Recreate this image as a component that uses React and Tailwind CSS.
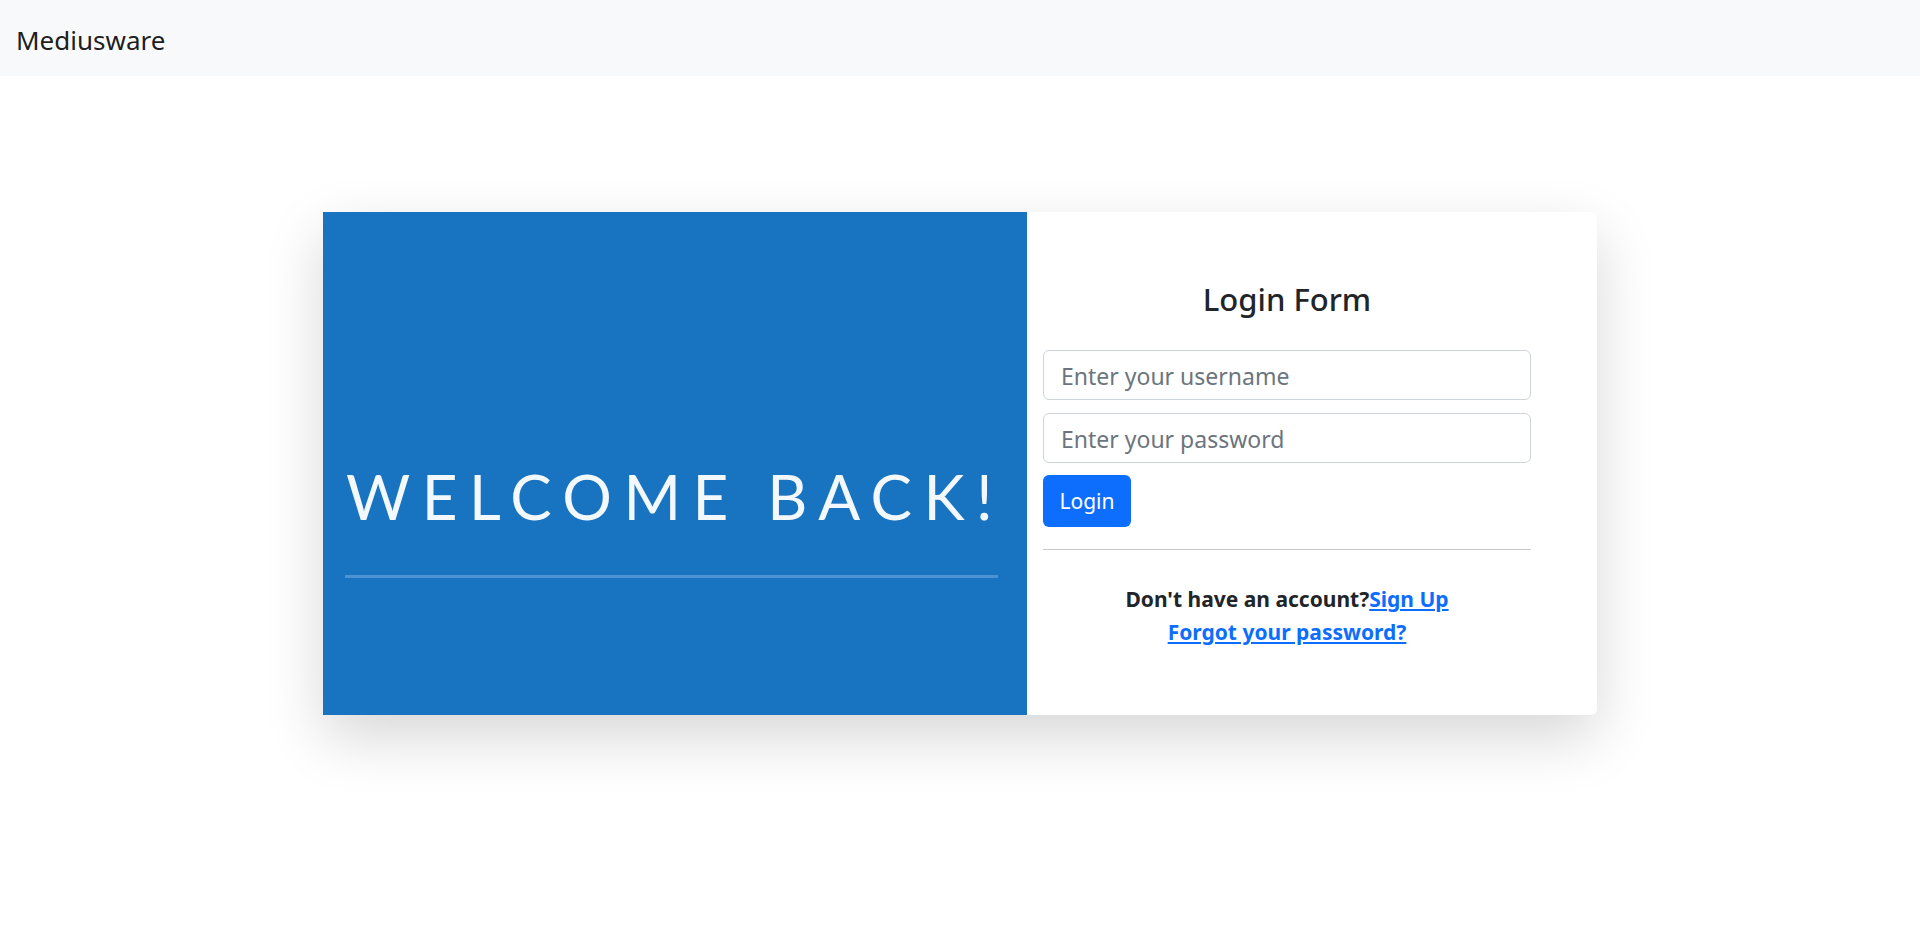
export default function App() {
  return (
    <div className="min-h-screen bg-white font-['Noto_Sans',sans-serif] text-[#212529]">
      {/* navbar */}
      <nav className="h-[76px] bg-[#f8f9fa] flex items-center px-[16px] pt-[4px]">
        <span className="text-[26px] text-black/90">Mediusware</span>
      </nav>

      {/* card */}
      <div className="w-[1274px] mx-auto mt-[136px] flex bg-white rounded-r-[6px] shadow-[0_22px_60px_rgba(0,0,0,0.16)]">
        <div className="w-[704px] h-[503px] bg-[#1873c0] flex flex-col pl-[23px] pt-[253px]">
          <div className="font-['Lato',sans-serif] font-normal text-[62px] leading-none tracking-[11.5px] text-white/95 whitespace-nowrap">
            WELCOME BACK!
          </div>
          <div className="mt-[48px] -ml-[1px] w-[653px] h-[3px] bg-[#4f92d0]" />
        </div>

        <div className="flex-1 pl-[16px]">
          <div className="w-[488px] flex flex-col">
            <h3 className="mt-[63px] h-[48px] flex items-center justify-center text-[31px] font-medium">Login Form</h3>
            <input
              type="text"
              placeholder="Enter your username"
              className="mt-[27px] h-[50px] w-full border border-[#ced4da] rounded-[6px] px-[17px] pt-[2px] text-[23px] placeholder:text-[#6c757d] outline-none"
            />
            <input
              type="password"
              placeholder="Enter your password"
              className="mt-[13px] h-[50px] w-full border border-[#ced4da] rounded-[6px] px-[17px] pt-[2px] text-[23px] placeholder:text-[#6c757d] outline-none"
            />
            <div className="mt-[12px]">
              <button className="h-[52px] w-[88px] pt-[2px] bg-[#0d6efd] text-white text-[21px] rounded-[6px]">Login</button>
            </div>
            <hr className="mt-[22px] border-0 border-t border-[#c8c8c8]" />
            <div className="mt-[33px] text-center text-[21px] font-bold leading-[33px]">
              <p>
                Don't have an account?<a href="#" className="text-[#0d6efd] underline">Sign Up</a>
              </p>
              <p>
                <a href="#" className="text-[#0d6efd] underline">Forgot your password?</a>
              </p>
            </div>
          </div>
        </div>
      </div>
    </div>
  );
}
